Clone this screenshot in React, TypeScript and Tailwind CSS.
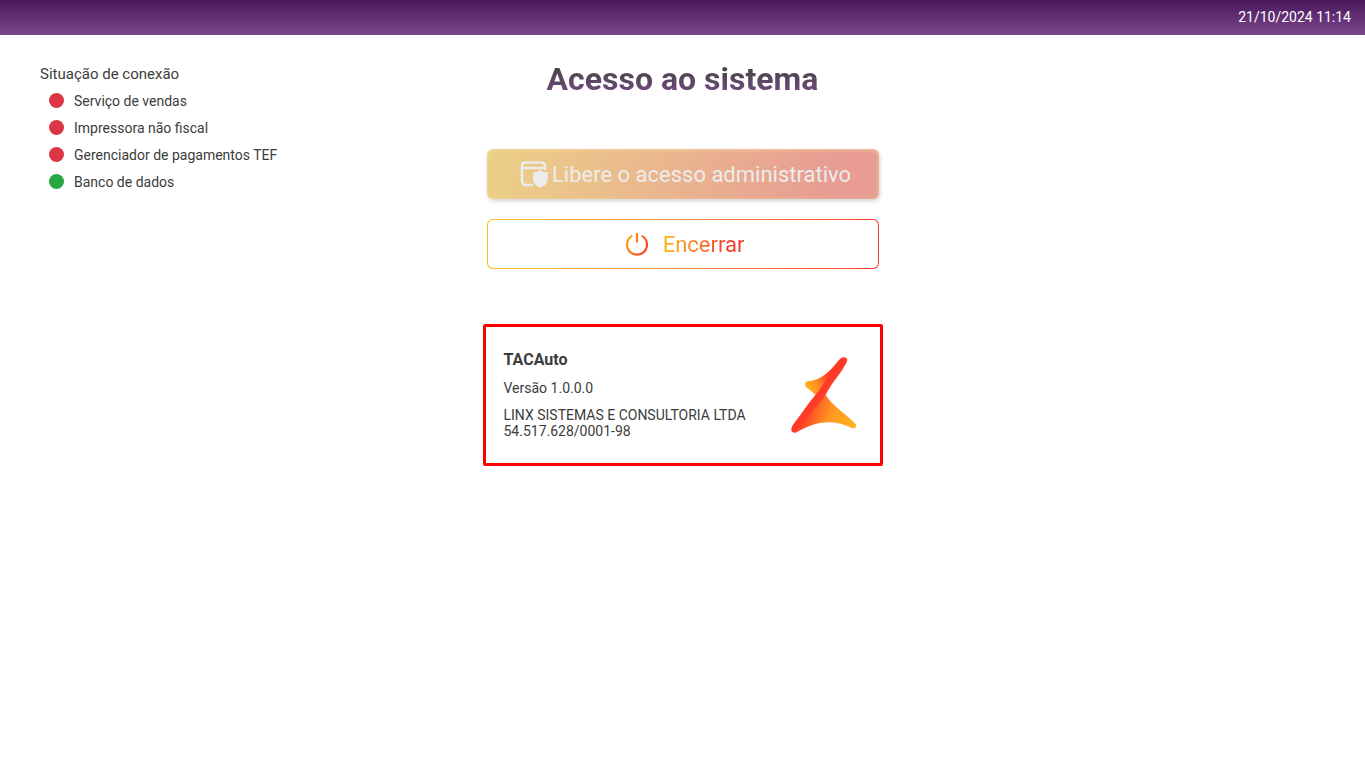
import React from "react";

type Service = { name: string; online: boolean };

const services: Service[] = [
  { name: "Serviço de vendas", online: false },
  { name: "Impressora não fiscal", online: false },
  { name: "Gerenciador de pagamentos TEF", online: false },
  { name: "Banco de dados", online: true },
];

function WindowShieldIcon() {
  return (
    <svg width="28" height="28" viewBox="0 0 28 28" fill="none" aria-hidden="true">
      <path
        d="M13 25H5.500C3.500 25 2 23.500 2 21.500V6C2 4 3.500 2.500 5.500 2.500H21.500C23.500 2.500 25 4 25 6V10M2 8H25"
        stroke="#ececec"
        strokeWidth="2.500"
      />
      <path
        d="M20.300 9.700C22.300 11.500 24.700 12.400 27.900 12.500V18.500C27.900 23 25 26 20.300 27.700C15.600 26 13 23 13 18.500V12.500C15.900 12.400 18.300 11.500 20.300 9.700Z"
        fill="#ececec"
      />
    </svg>
  );
}

function PowerIcon() {
  return (
    <svg width="24" height="24" viewBox="0 0 24 24" fill="none" aria-hidden="true">
      <defs>
        <linearGradient id="power" gradientUnits="userSpaceOnUse" x1="2" y1="6" x2="22" y2="18">
          <stop offset="0" stopColor="#ffa51c" />
          <stop offset="1" stopColor="#f5402a" />
        </linearGradient>
      </defs>
      <path d="M7.300 3.800A10 10 0 1 0 16.700 3.800M12 1V10.500" stroke="url(#power)" strokeWidth="2.200" />
    </svg>
  );
}

function Logo() {
  return (
    <svg width="66" height="77" viewBox="35 35 198 231" role="img" aria-label="Linx">
      <defs>
        <linearGradient id="wing" gradientUnits="userSpaceOnUse" x1="82" y1="125" x2="145" y2="85">
          <stop offset="0" stopColor="#ffb31c" />
          <stop offset="0.450" stopColor="#ff8a20" />
          <stop offset="1" stopColor="#ff3d28" />
        </linearGradient>
        <linearGradient id="foot" gradientUnits="userSpaceOnUse" x1="90" y1="190" x2="225" y2="235">
          <stop offset="0" stopColor="#ff4a26" />
          <stop offset="0.450" stopColor="#ff9520" />
          <stop offset="1" stopColor="#ffb41c" />
        </linearGradient>
        <linearGradient id="blade" gradientUnits="userSpaceOnUse" x1="95" y1="130" x2="145" y2="168">
          <stop offset="0" stopColor="#ff3527" />
          <stop offset="0.600" stopColor="#ff3b28" />
          <stop offset="1" stopColor="#ff5a2a" />
        </linearGradient>
      </defs>
      <path
        d="M84 108C118 106 142 91 181 42L150 130L108 149C99 139 90 133 82 127C76 122 75 110 84 108Z"
        fill="url(#wing)"
      />
      <path
        d="M139 149C160 183 199 204 228 235C235 242 228 252 218 248C164 221 113 226 59 257L108 165Z"
        fill="url(#foot)"
      />
      <path
        d="M180 43C187 34 199 33 203 41C205 46 201 53 197 60C181 89 151 122 139 149C126 169 111 183 98 203C83 225 67 251 55 259C46 266 34 261 36 251C37 243 43 235 51 225C70 200 88 172 108 149C135 119 153 75 180 43Z"
        fill="url(#blade)"
      />
    </svg>
  );
}

export default function App() {
  return (
    <div className="min-h-screen bg-white font-['Roboto',sans-serif] text-[#3c3c3c]">
      <header className="flex h-[35px] items-center justify-end bg-linear-to-b from-[#4a185c] to-[#7c468d] px-3.5 pb-0.5">
        <time dateTime="2024-10-21T11:14" className="text-sm text-white">
          21/10/2024 11:14
        </time>
      </header>

      <div className="grid grid-cols-[1fr_400px_1fr]">
        <aside className="pt-7 pl-10">
          <h2 className="text-[15px] leading-[22px]">Situação de conexão</h2>
          <ul className="pt-0.5 pl-[9px]">
            {services.map((service) => (
              <li key={service.name} className="flex h-[27px] items-center gap-2.5 text-sm">
                <span
                  className={`size-[15px] rounded-full ${service.online ? "bg-[#28a745]" : "bg-[#dc3545]"}`}
                />
                {service.name}
              </li>
            ))}
          </ul>
        </aside>

        <main className="flex flex-col pt-6">
          <h1 className="bg-linear-to-b from-[#444444] from-20% to-[#7c468d] bg-clip-text text-center text-[32px] leading-10 font-bold text-transparent">
            Acesso ao sistema
          </h1>

          <div className="mt-[50px] flex flex-col gap-5 px-1">
            <button
              type="button"
              disabled
              className="flex h-[50px] items-center justify-center gap-1 rounded-md bg-linear-100 from-[#ebd086] to-[#e79b93] to-90% pl-1.5 text-[22px] text-[#ececec] shadow-[1px_2px_4px_rgba(0,0,0,0.18),inset_0_1px_4px_rgba(255,220,160,0.7)]"
            >
              <WindowShieldIcon />
              Libere o acesso administrativo
            </button>
            <button
              type="button"
              className="flex h-[50px] items-center justify-center gap-3.5 rounded-md border border-transparent pl-1 text-[22px] [background:linear-gradient(#fff,#fff)_padding-box,linear-gradient(to_right,#fcbe1f,#ff9050_50%,#f5392b)_border-box]"
            >
              <PowerIcon />
              <span className="bg-linear-to-r from-[#fcb415] to-[#f5392b] to-80% bg-clip-text text-transparent">
                Encerrar
              </span>
            </button>
          </div>

          <section className="mt-[55px] flex h-[142px] items-center justify-between rounded-xs border-3 border-[#ff0000] pr-[23px] pl-[18px]">
            <div className="pb-0.5 text-sm leading-4">
              <h2 className="text-base leading-5 font-bold">TACAuto</h2>
              <p className="mt-2.5">Versão 1.0.0.0</p>
              <p className="mt-[11px]">
                LINX SISTEMAS E CONSULTORIA LTDA
                <br />
                54.517.628/0001-98
              </p>
            </div>
            <Logo />
          </section>
        </main>
      </div>
    </div>
  );
}
